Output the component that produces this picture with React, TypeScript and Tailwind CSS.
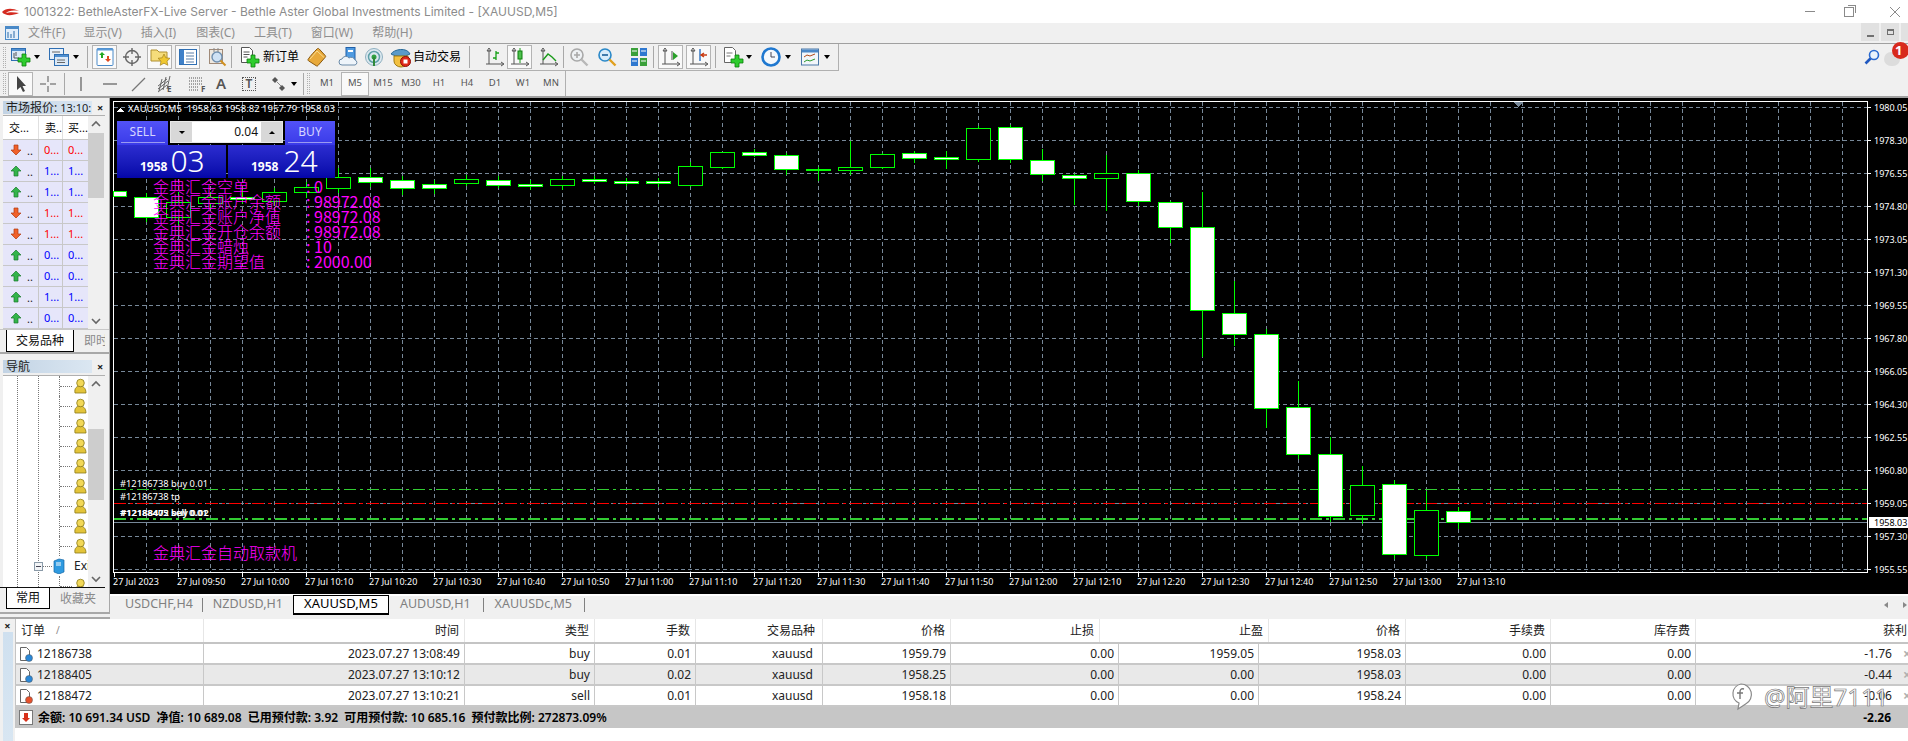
import React from "react";

const Plus = ({ x = 0, y = 0, s = 1 }: { x?: number; y?: number; s?: number }) => (
  <path transform={`translate(${x} ${y}) scale(${s})`} d="M4 0h4v4h4v4H8v4H4V8H0V4h4z" fill="#2ecc2e" stroke="#0b7d0b" strokeWidth="0.8" />
);
const Ic = ({ children, w = 22, h = 22 }: { children: React.ReactNode; w?: number; h?: number }) => (
  <svg width={w} height={h} viewBox="0 0 22 22" className="shrink-0">{children}</svg>
);

const IconNewChart = () => (
  <Ic><rect x="1.5" y="2.5" width="14" height="12" fill="#dbe9f7" stroke="#2f6fb3" /><rect x="2" y="3" width="13" height="2" fill="#4f8fd0" /><path d="M4 7v5h5M6 6v4" stroke="#555" fill="none" /><Plus x={8} y={8} /></Ic>
);
const IconProfiles = () => (
  <Ic><rect x="1.5" y="2.5" width="14" height="11" fill="#e7f0fa" stroke="#2f6fb3" /><rect x="6.5" y="8.5" width="14" height="11" fill="#dbe9f7" stroke="#2f6fb3" /><rect x="7" y="9" width="13" height="2" fill="#4f8fd0" /><path d="M4 6h8M9 14h8M9 16.5h8" stroke="#666" /></Ic>
);
const IconMW = () => (
  <Ic><rect x="3" y="2.5" width="16" height="17" rx="1" fill="#fff" stroke="#4a8ac8" /><rect x="3" y="2.5" width="16" height="2" fill="#5a9ad8" /><path d="M8 6l3 3H9v3H7V9H5z" fill="#24a824" /><path d="M14 16l-3-3h2v-3h2v3h2z" fill="#e04a20" /></Ic>
);
const IconCross = () => (
  <Ic><circle cx="11" cy="11" r="6.5" fill="none" stroke="#666" strokeWidth="1.4" /><path d="M11 2v6M11 14v6M2 11h6M14 11h6" stroke="#666" strokeWidth="1.4" /></Ic>
);
const IconFolder = () => (
  <Ic><path d="M2 4h6l2 2h8v9H2z" fill="#f5dc7a" stroke="#b09030" /><path d="M15 8l1.8 3.8 4.2.5-3 2.9.8 4.1-3.8-2.1-3.8 2.1.8-4.1-3-2.9 4.2-.5z" fill="#f0c830" stroke="#a08020" strokeWidth="0.7" /></Ic>
);
const IconTerm = () => (
  <Ic><rect x="2.5" y="3.5" width="17" height="15" fill="#fff" stroke="#2f6fb3" /><rect x="3" y="4" width="4" height="14" fill="#3f80c8" /><path d="M9 7h8M9 10h8M9 13h8M9 16h8" stroke="#5a7fa8" /></Ic>
);
const IconTester = () => (
  <Ic><rect x="3.5" y="3.5" width="13" height="14" fill="#eee8e0" stroke="#a08a78" /><circle cx="11" cy="11" r="5" fill="#cfe2f5" stroke="#7090b0" strokeWidth="1.4" /><path d="M14.5 14.5l5 5" stroke="#d09020" strokeWidth="2" /><path d="M8 2v4M12 2v4" stroke="#888" /></Ic>
);
const IconOrder = () => (
  <Ic><path d="M3.5 1.5h8l3 3v12h-11z" fill="#fff" stroke="#555" /><path d="M5.5 6h6M5.5 8.5h6M5.5 11h4" stroke="#555" /><Plus x={9} y={9} /></Ic>
);
const IconBook = () => (
  <Ic><path d="M2 13.500C5 9 8 6 11 3c.8-.8 1.500-.8 2.200 0l6 6.500c.6.700.6 1.200 0 1.800L12 19.500c-.6.700-1.200.7-1.800.2L2.500 14.800c-.5-.4-.7-.8-.5-1.300z" fill="#e8a93a" stroke="#8a5a10" /><path d="M4 13l7-8 7 6.500" fill="none" stroke="#f8dc90" /></Ic>
);
const IconCloud = () => (
  <Ic><rect x="8" y="1.5" width="9" height="12" fill="#4f9ae0" stroke="#1f5fa8" /><rect x="10" y="4" width="5" height="2" fill="#fff" /><path d="M4 19a3 3 0 0 1 0-6 4 4 0 0 1 7-1 4 4 0 0 1 6 2 2.6 2.6 0 0 1 0 5z" fill="#eef4fa" stroke="#6a8aa8" /></Ic>
);
const IconSignal = () => (
  <Ic><circle cx="11" cy="11" r="8.5" fill="#dce8f0" stroke="#8fb0c0" /><circle cx="11" cy="11" r="5.5" fill="none" stroke="#5fa0a8" strokeWidth="1.5" /><circle cx="11" cy="11" r="2.5" fill="#30a040" /><path d="M11 11v9" stroke="#308838" strokeWidth="2" /></Ic>
);
const IconAuto = () => (
  <Ic><path d="M1 8c3-5 16-7 19 0-5 3-14 3-19 0z" fill="#5a9ac8" stroke="#2a6a98" /><path d="M4 10h14v5a7 6 0 0 1-14 0z" fill="#f2c040" stroke="#a07a10" /><circle cx="15.5" cy="15.5" r="5" fill="#e02a1a" stroke="#901008" /><rect x="13.5" y="13.5" width="4" height="4" fill="#fff" /></Ic>
);
const Axes = ({ children }: { children?: React.ReactNode }) => (
  <Ic><path d="M5 2l-2 3h4zM5 4v14M2 18h17M17 16l3 2-3 2" fill="none" stroke="#555" />{children}</Ic>
);
const IconBars = () => <Axes><path d="M12 5v9M12 7h3M9 12h3" stroke="#16a016" strokeWidth="1.3" fill="none" /></Axes>;
const IconCandle = () => <Axes><path d="M11 2v15" stroke="#16a016" /><rect x="9" y="5" width="4" height="8" fill="#4fc04f" stroke="#0c800c" /></Axes>;
const IconLine = () => <Axes><path d="M5 14l5-6 4 3 4 4" fill="none" stroke="#189a18" strokeWidth="1.4" /></Axes>;
const IconZoomIn = () => (
  <Ic><circle cx="9" cy="9" r="6" fill="#eef1f4" stroke="#a8a8a8" strokeWidth="1.6" /><path d="M6 9h6M9 6v6" stroke="#a8a8a8" strokeWidth="1.6" /><path d="M13.5 13.5l6 6" stroke="#b8b8b8" strokeWidth="2.4" /></Ic>
);
const IconZoomOut = () => (
  <Ic><circle cx="9" cy="9" r="6" fill="#d8ecfa" stroke="#2a88c8" strokeWidth="1.6" /><path d="M6 9h6" stroke="#1a5f98" strokeWidth="1.6" /><path d="M13.5 13.5l6 6" stroke="#e0a020" strokeWidth="2.4" /></Ic>
);
const IconTile = () => (
  <Ic><rect x="3" y="2" width="7" height="8" fill="#3aa03a" /><rect x="12" y="2" width="7" height="8" fill="#2f78d0" /><rect x="3" y="12" width="7" height="8" fill="#2f78d0" /><rect x="12" y="12" width="7" height="8" fill="#3aa03a" /><path d="M4 5h5M13 5h5M4 15h5M13 15h5" stroke="#fff" /></Ic>
);
const IconShift = () => <Axes><path d="M12 5v9" stroke="#555" /><path d="M13 6l5 4-5 4z" fill="#2aa02a" /></Axes>;
const IconAutoscroll = () => <Axes><path d="M12 3v12" stroke="#2a70c0" strokeWidth="1.4" /><path d="M19 9l-5 0M16 7l-3 2 3 2" fill="none" stroke="#c83a10" strokeWidth="1.4" /></Axes>;
const IconNewDoc = () => (
  <Ic><path d="M2.5 1.5h8l3 3v12h-11z" fill="#fff" stroke="#666" /><path d="M4.5 7h6M4.5 10h4" stroke="#777" /><Plus x={9} y={9} /></Ic>
);
const IconClock = () => (
  <Ic><circle cx="11" cy="11" r="8.5" fill="#f4f8fc" stroke="#1f78d0" strokeWidth="2.6" /><path d="M11 6v5h4" fill="none" stroke="#445" /></Ic>
);
const IconTemplate = () => (
  <Ic><rect x="2.5" y="3" width="17" height="16" fill="#f2f6fa" stroke="#4a78a8" /><rect x="3" y="3.5" width="16" height="3" fill="#4a88c8" /><path d="M5 11l3-2 3 1 5-2" fill="none" stroke="#b04a1a" /><path d="M5 16l3-2 3 1 5-2" fill="none" stroke="#2a9a2a" /></Ic>
);

const Caret = ({ c = "" }: { c?: string }) => (
  <span className={`flex justify-center shrink-0 ${c}`}><span className="w-0 h-0 border-x-[3.5px] border-x-transparent border-t-[4px] border-t-black" /></span>
);
const Sep = ({ c = "" }: { c?: string }) => <span className={`w-[1px] h-[22px] bg-[#a8a8a8] shrink-0 ${c}`} />;
const Grip = ({ c = "" }: { c?: string }) => <span className={`w-[3px] h-[21px] shrink-0 border-x border-dotted border-[#b0b0b0] ${c}`} />;
const B = ({ c = "", active, children }: { c?: string; active?: boolean; children: React.ReactNode }) => (
  <span className={`h-[24px] flex items-center justify-center shrink-0 ${active ? "w-[25px] border border-[#b4b4b4] bg-[#f9f9f9]" : "w-[24px]"} ${c}`}>{children}</span>
);

const DrawIcon = ({ children }: { children: React.ReactNode }) => (
  <svg width="20" height="20" viewBox="0 0 20 20" fill="none" stroke="#555" className="shrink-0">{children}</svg>
);

function TitleBar() {
  return (
    <div className="h-[23px] bg-white flex items-center relative shrink-0">
      <svg width="18" height="8" viewBox="0 0 18 8" className="ml-[2px]"><path d="M0 4C4 0 10 0 17 3 10 2 6 3 4 5 7 4 12 4 17 5 10 8 3 8 0 4z" fill="#d42a20" /></svg>
      <span className="ml-[4px] text-[12px] [font-family:Inter,sans-serif] text-[#8c8c8c] whitespace-nowrap">1001322: BethleAsterFX-Live Server - Bethle Aster Global Investments Limited - [XAUUSD,M5]</span>
      <span className="ml-auto w-[10px] h-[1px] bg-[#8a8a8a] mr-[29px]" />
      <span className="w-[10px] h-[10px] border border-[#8a8a8a] mr-[36px] relative after:absolute after:content-[''] after:-top-[3px] after:-right-[3px] after:w-[8px] after:h-[8px] after:border-t after:border-r after:border-[#8a8a8a]" />
      <svg width="10" height="10" viewBox="0 0 10 10" className="mr-[8px]"><path d="M0 0l10 10M10 0L0 10" stroke="#8a8a8a" /></svg>
    </div>
  );
}

function MenuBar() {
  const items = [
    ["文件(F)", "ml-[9px]"],
    ["显示(V)", "ml-[18px]"],
    ["插入(I)", "ml-[19px]"],
    ["图表(C)", "ml-[20px]"],
    ["工具(T)", "ml-[19px]"],
    ["窗口(W)", "ml-[19px]"],
    ["帮助(H)", "ml-[19px]"],
  ];
  return (
    <div className="h-[21px] bg-[#f0f0f0] border-b border-[#a0a0a0] flex items-center shrink-0">
      <svg width="14" height="15" viewBox="0 0 14 15" className="ml-[5px]"><rect x="0.5" y="0.5" width="13" height="13" fill="#e2eefa" stroke="#4a8ac8" /><rect x="1" y="1" width="12" height="2" fill="#4a8ac8" /><path d="M3 6v6M6 8v4M9 5v7" stroke="#2a6aa8" /></svg>
      {items.map(([t, c]) => (
        <span key={t} className={`text-[12px] text-[#8f8f8f] whitespace-nowrap ${c}`}>{t}</span>
      ))}
      <span className="ml-auto flex self-start h-[19px] items-center gap-[2px] -mt-[1px]">
        <span className="w-[18px] h-[19px] bg-[#e1e1e1] flex items-end justify-center pb-[4px]"><span className="w-[7px] h-[2px] bg-[#707070]" /></span>
        <span className="w-[18px] h-[19px] bg-[#e1e1e1] flex items-center justify-center"><span className="w-[7px] h-[6px] border border-[#707070] border-t-2" /></span>
        <span className="w-[7px] h-[19px] bg-[#e1e1e1]" />
      </span>
    </div>
  );
}

function Toolbar1() {
  return (
    <div className="h-[27px] bg-[#f0f0f0] flex shrink-0">
      <div className="w-[839px] border-r border-b border-[#b0b0b0] flex items-center pl-[3px]">
        <Grip />
        <B c="ml-[2px] w-[26px]"><IconNewChart /></B>
        <Caret c="w-[8px] -ml-[1px]" />
        <B c="ml-[5px] w-[26px]"><IconProfiles /></B>
        <Caret c="w-[8px]" />
        <Sep c="ml-[7px]" />
        <B active c="ml-[4px]"><IconMW /></B>
        <B c="ml-[3px]"><IconCross /></B>
        <B active c="ml-[3px]"><IconFolder /></B>
        <B active c="ml-[3px]"><IconTerm /></B>
        <B c="ml-[5px]"><IconTester /></B>
        <Sep c="ml-[2px]" />
        <B c="ml-[5px]"><IconOrder /></B>
        <span className="text-[12px] text-black ml-[2px] w-[41px] whitespace-nowrap">新订单</span>
        <B c="ml-[1px]"><IconBook /></B>
        <B c="ml-[8px]"><IconCloud /></B>
        <B c="ml-[1px]"><IconSignal /></B>
        <B c="ml-[3px]"><IconAuto /></B>
        <span className="text-[12px] text-black w-[56px] whitespace-nowrap">自动交易</span>
        <Sep />
        <B c="ml-[13px]"><IconBars /></B>
        <B active><IconCandle /></B>
        <B c="ml-[5px]"><IconLine /></B>
        <Sep c="ml-[2px]" />
        <B c="ml-[3px]"><IconZoomIn /></B>
        <B c="ml-[4px]"><IconZoomOut /></B>
        <B c="ml-[8px]"><IconTile /></B>
        <Sep c="ml-[2px]" />
        <B active c="ml-[4px]"><IconShift /></B>
        <B active c="ml-[3px]"><IconAutoscroll /></B>
        <Sep c="ml-[4px]" />
        <B c="ml-[5px]"><IconNewDoc /></B>
        <Caret c="w-[8px]" />
        <B c="ml-[6px]"><IconClock /></B>
        <Caret c="w-[8px] ml-[1px]" />
        <B c="ml-[6px]"><IconTemplate /></B>
        <Caret c="w-[8px] ml-[1px]" />
      </div>
      <div className="flex-1 flex items-center border-b border-[#f0f0f0]">
        <svg width="16" height="16" viewBox="0 0 16 16" className="ml-[1025px]"><circle cx="10" cy="6" r="4.5" fill="#eaf3fc" stroke="#2a6ad0" strokeWidth="1.6" /><path d="M6.5 9.5L1.5 14.5" stroke="#1f58c0" strokeWidth="2.6" /></svg>
        <span className="relative ml-[4px] w-[16px] h-[14px] bg-[#dcdcdc] rounded-full mt-[4px]">
          <span className="absolute -top-[10px] left-[8px] w-[17px] h-[17px] rounded-full bg-[#d8291c] text-white text-[13px] leading-[17px] font-bold pl-[3px]">1</span>
        </span>
      </div>
    </div>
  );
}

const TF = ["M1", "M5", "M15", "M30", "H1", "H4", "D1", "W1", "MN"];

function Toolbar2() {
  return (
    <div className="h-[27px] bg-[#f0f0f0] border-b-2 border-[#a0a0a0] flex shrink-0">
      <div className="w-[566px] flex items-center pl-[3px] border-r border-[#b0b0b0]">
        <Grip />
        <B active c="ml-[2px]">
          <svg width="12" height="18" viewBox="0 0 12 18"><path d="M2 1v14l3.5-3 2.5 5 2-1-2.5-5H11z" fill="#444" /></svg>
        </B>
        <B c="ml-[3px]"><DrawIcon><path d="M10 2v6M10 12v6M2 10h6M12 10h6" /></DrawIcon></B>
        <Sep c="ml-[4px]" />
        <B c="ml-[4px]"><DrawIcon><path d="M10 3v14" stroke="#666" strokeWidth="1.3" /></DrawIcon></B>
        <B c="ml-[5px]"><DrawIcon><path d="M3 10h14" stroke="#666" strokeWidth="1.3" /></DrawIcon></B>
        <B c="ml-[4px]"><DrawIcon><path d="M4 17L17 4" stroke="#777" strokeWidth="1.3" /></DrawIcon></B>
        <B c="ml-[3px] relative">
          <DrawIcon><path d="M3 12l9-7M3 15l10-8M3 18l9-7M7 5l-3 12M11 3l-3 13M15 2l-3 13" stroke="#666" /></DrawIcon>
          <span className="absolute left-[14px] top-[13px] text-[8px] leading-[8px] font-bold text-[#555]">E</span>
        </B>
        <B c="ml-[7px] relative">
          <DrawIcon><path d="M3 4h14M3 7h14M3 10h14M3 13h10M3 16h10" strokeDasharray="1 1" /></DrawIcon>
          <span className="absolute left-[17px] top-[13px] text-[8px] leading-[8px] font-bold text-[#555]">F</span>
        </B>
        <span className="w-[24px] ml-[1px] text-center text-[15px] font-semibold text-[#555]">A</span>
        <B c="ml-[4px] relative">
          <span className="w-[14px] h-[14px] border border-dotted border-[#555] flex items-center justify-center text-[12px] leading-none font-semibold text-[#555]">T</span>
        </B>
        <B c="ml-[6px]">
          <svg width="16" height="16" viewBox="0 0 16 16"><path d="M4 1l3 3-3 3-3-3z" fill="#555" /><path d="M11 9l3 3-3 3-3-3z" fill="#555" /><path d="M6 6l4 4" stroke="#888" /></svg>
        </B>
        <Caret c="w-[8px] -ml-[1px]" />
        <Sep c="ml-[5px]" />
        <Grip c="ml-[3px]" />
        <div className="flex items-center ml-[3px]">
          {TF.map((t) =>
            <span key={t} className={`h-[24px] w-[28px] flex items-center justify-center text-[9.5px] text-[#555] ${t === "M5" ? "border border-[#b4b4b4] bg-[#f9f9f9]" : ""}`}>{t}</span>
          )}
        </div>
      </div>
    </div>
  );
}

function Arrow({ up }: { up: boolean }) {
  return (
    <svg width="12" height="12" viewBox="0 0 12 12" className="shrink-0">
      {up ? <path d="M6 1l5 5H8v5H4V6H1z" fill="#33b44a" stroke="#1a7a2c" strokeWidth="0.7" /> : <path d="M6 11L1 6h3V1h4v5h3z" fill="#f0602a" stroke="#b03a10" strokeWidth="0.7" />}
    </svg>
  );
}

const quotes: [boolean, string][] = [
  [false, "0..."], [true, "1..."], [true, "1..."], [false, "1..."], [false, "1..."],
  [true, "0..."], [true, "0..."], [true, "1..."], [true, "0..."],
];

function PanelHead({ title, extra }: { title: string; extra?: string }) {
  return (
    <div className="h-[15px] flex items-center pl-[3px] shrink-0">
      <div className="w-[89px] h-[13px] bg-gradient-to-r from-[#c2d3e4] to-[#dbe7f2] flex items-center pl-[3px] text-[12px] leading-[13px] text-[#222] whitespace-nowrap overflow-hidden">
        {title}{extra && <span className="ml-[3px] text-[11px]">{extra}</span>}
      </div>
      <span className="ml-[5px] text-[11px] leading-none font-bold text-[#222]">×</span>
    </div>
  );
}

function ScrollBar({ thumb, spacer }: { thumb: string; spacer: string }) {
  return (
    <div className="w-[16px] flex flex-col items-center bg-[#f0f0f0] shrink-0">
      <svg width="10" height="17" viewBox="0 0 10 17" className="shrink-0"><path d="M1 10l4-4 4 4" fill="none" stroke="#666" strokeWidth="1.6" /></svg>
      <div className={`w-full bg-[#cdcdcd] shrink-0 ${thumb}`} />
      <div className={spacer} />
      <svg width="10" height="17" viewBox="0 0 10 17" className="shrink-0 mt-auto"><path d="M1 7l4 4 4-4" fill="none" stroke="#666" strokeWidth="1.6" /></svg>
    </div>
  );
}

function MarketWatch() {
  return (
    <div className="h-[256px] flex flex-col border-b-2 border-[#a8a8a8] pt-[2px] shrink-0">
      <PanelHead title="市场报价:" extra="13:10:" />
      <div className="h-[214px] flex ml-[3px] mr-[4px] border-t border-[#b0b0b0]">
        <div className="w-[85px] shrink-0 flex flex-col">
          <div className="h-[24px] flex bg-white text-[11px] border-b border-[#c8c8c8] shrink-0">
            <span className="w-[36px] pl-[6px] leading-[23px] border-r border-[#e0e0e0] overflow-hidden whitespace-nowrap">交...</span>
            <span className="w-[24px] pl-[6px] leading-[23px] border-r border-[#e0e0e0] overflow-hidden whitespace-nowrap">卖...</span>
            <span className="w-[25px] pl-[5px] leading-[23px] overflow-hidden whitespace-nowrap">买...</span>
          </div>
          {quotes.map(([up, v], i) => (
            <div key={i} className="h-[21px] flex bg-[#e6e6fa] border-b border-[#c8c8c8] text-[11px] shrink-0">
              <span className="w-[36px] flex items-center pl-[7px] gap-[5px] border-r border-[#c8c8c8]"><Arrow up={up} /><span className="leading-none text-[#222]">..</span></span>
              <span className={`w-[24px] flex items-center pl-[5px] border-r border-[#c8c8c8] ${up ? "text-[#0000ff]" : "text-[#ff0000]"}`}>{v}</span>
              <span className={`w-[25px] flex items-center pl-[5px] ${up ? "text-[#0000ff]" : "text-[#ff0000]"}`}>{v}</span>
            </div>
          ))}
        </div>
        <ScrollBar thumb="h-[65px]" spacer="flex-1" />
      </div>
      <div className="h-[23px] flex pl-[6px] text-[12px] border-t border-[#c8c8c8]">
        <span className="w-[68px] h-[22px] bg-white border-r border-b border-black border-l flex items-center justify-center text-[#111]">交易品种</span>
        <span className="ml-[10px] w-[21px] overflow-hidden whitespace-nowrap text-[#8a8a8a] leading-[22px]">即时</span>
      </div>
    </div>
  );
}

function GoldRow() {
  return (
    <div className="h-[20px] flex items-center shrink-0 border-l border-dotted border-[#777]">
      <span className="w-[12px] border-t border-dotted border-[#777] shrink-0" />
      <svg width="13" height="16" viewBox="0 0 13 16" className="shrink-0 ml-[2px]"><path d="M1 15c-1-5 2-7 5-7s6 2 6 7z" fill="#e3c43a" stroke="#8a7a18" strokeWidth="0.8" /><circle cx="6.5" cy="5" r="3.8" fill="#f2d858" stroke="#8a7a18" strokeWidth="0.8" /></svg>
    </div>
  );
}

function Navigator() {
  const rows = [0, 1, 2, 3, 4, 5, 6, 7, 8];
  return (
    <div className="h-[260px] flex flex-col pt-[5px] border-b-2 border-[#a8a8a8] shrink-0">
      <PanelHead title="导航" />
      <div className="h-[212px] ml-[3px] mr-[4px] mt-[1px] flex border-t border-[#b0b0b0] shrink-0">
        <div className="w-[85px] bg-white relative overflow-hidden shrink-0 flex">
          <span className="ml-[14px] w-0 border-l border-dotted border-[#777]" />
          <span className="ml-[20px] w-0 border-l border-dotted border-[#777]" />
          <div className="flex-1 flex flex-col pl-[20px]">
            {rows.map((r) => <GoldRow key={r} />)}
            <div className="h-[20px] flex items-center -ml-[25px] relative shrink-0">
              <span className="w-[9px] h-[9px] border border-[#8a9aa8] bg-[#f2f4f6] flex items-center justify-center shrink-0"><span className="w-[5px] h-[1px] bg-[#445]" /></span>
              <span className="w-[9px] border-t border-dotted border-[#777] shrink-0" />
              <svg width="12" height="16" viewBox="0 0 12 16" className="shrink-0 ml-[1px]"><path d="M1 3l5-2 5 1v12l-5 2-5-2z" fill="#2f9ae0" stroke="#1568a8" strokeWidth="0.7" /><path d="M3 5h5M3 7h5" stroke="#fff" /></svg>
              <span className="ml-[9px] text-[12px] text-[#222] leading-none">Exi</span>
            </div>
            <GoldRow />
          </div>
        </div>
        <ScrollBar thumb="h-[71px] mt-[36px]" spacer="flex-1" />
      </div>
      <div className="h-[22px] flex pl-[6px] text-[12px] border-t border-[#111] mr-[4px] ml-[0px]">
        <span className="w-[44px] h-[21px] bg-white border-x border-b border-black flex items-center justify-center text-[#111]">常用</span>
        <span className="ml-[10px] text-[#8a8a8a] leading-[21px] whitespace-nowrap">收藏夹</span>
      </div>
    </div>
  );
}

type C = [number, number, number, number, number, boolean];
const candles: C[] = [
  [146, 197, 217, 193, 222, true],
  [178, 202, 217, 192, 235, false],
  [210, 197, 203, 192, 208, false],
  [242, 197, 199, 190, 204, true],
  [274, 192, 201, 188, 206, false],
  [306, 187, 192, 182, 198, false],
  [338, 177, 188, 168, 193, false],
  [370, 177, 182, 168, 187, true],
  [402, 180, 188, 176, 195, true],
  [434, 184, 188, 180, 194, true],
  [466, 179, 183, 175, 186, false],
  [498, 180, 185, 176, 188, true],
  [530, 184, 186, 180, 190, true],
  [562, 179, 185, 176, 190, false],
  [594, 179, 181, 176, 184, true],
  [626, 181, 183, 178, 186, true],
  [658, 181, 183, 178, 187, true],
  [690, 166, 185, 162, 187, false],
  [722, 152, 167, 152, 169, false],
  [754, 152, 155, 149, 157, true],
  [786, 155, 169, 153, 175, true],
  [818, 169, 170, 167, 181, true],
  [850, 167, 170, 141, 175, false],
  [882, 154, 167, 153, 169, false],
  [914, 153, 158, 151, 163, true],
  [946, 157, 159, 151, 169, true],
  [978, 128, 159, 126, 162, false],
  [1010, 127, 159, 125, 163, true],
  [1042, 160, 174, 149, 181, true],
  [1074, 175, 178, 174, 205, true],
  [1106, 173, 178, 155, 211, false],
  [1138, 173, 201, 170, 206, true],
  [1170, 202, 227, 201, 243, true],
  [1202, 227, 310, 192, 357, true],
  [1234, 313, 334, 281, 346, true],
  [1266, 334, 408, 329, 428, true],
  [1298, 407, 454, 381, 459, true],
  [1330, 454, 516, 437, 522, true],
  [1362, 485, 515, 466, 524, false],
  [1394, 484, 554, 480, 559, true],
  [1426, 510, 555, 491, 559, false],
  [1458, 511, 522, 507, 529, true],
];

const prices = ["1980.05", "1978.30", "1976.55", "1974.80", "1973.05", "1971.30", "1969.55", "1967.80", "1966.05", "1964.30", "1962.55", "1960.80", "1959.05", "1957.30", "1955.55"];
const vx = Array.from({ length: 54 }, (_, i) => 146 + 32 * i);
const times = ["27 Jul 2023", "27 Jul 09:50", "27 Jul 10:00", "27 Jul 10:10", "27 Jul 10:20", "27 Jul 10:30", "27 Jul 10:40", "27 Jul 10:50", "27 Jul 11:00", "27 Jul 11:10", "27 Jul 11:20", "27 Jul 11:30", "27 Jul 11:40", "27 Jul 11:50", "27 Jul 12:00", "27 Jul 12:10", "27 Jul 12:20", "27 Jul 12:30", "27 Jul 12:40", "27 Jul 12:50", "27 Jul 13:00", "27 Jul 13:10"];

function ChartSvg() {
  return (
    <svg width="1798" height="496" viewBox="110 98 1798 496" className="absolute left-0 top-0" shapeRendering="crispEdges">
      <g stroke="#778899" strokeDasharray="4 3">
        {prices.map((_, i) => <line key={i} x1="114" x2="1867" y1={107.5 + 33 * i} y2={107.5 + 33 * i} />)}
        {vx.map((x) => <line key={x} x1={x + 0.5} x2={x + 0.5} y1="102" y2="572" />)}
      </g>
      <path d="M1514 102h9l-4.500 5z" fill="#778899" />
      <line x1="114" x2="1867" y1="489.5" y2="489.5" stroke="#32cd32" strokeDasharray="12 4 3 4" />
      <line x1="114" x2="1867" y1="503.500" y2="503.500" stroke="#ff0000" strokeDasharray="12 4 3 4" />
      <line x1="114" x2="1867" y1="519" y2="519" stroke="#32cd32" strokeWidth="2" strokeDasharray="12 4 3 4" />
      <line x1="114" x2="1867" y1="522.500" y2="522.500" stroke="#778899" />
      <path d="M113.500 101.500H1867.500V572.500H113.500z" fill="none" stroke="#fff" />
      {prices.map((_, i) => <line key={i} x1="1868" x2="1871" y1={107.5 + 33 * i} y2={107.5 + 33 * i} stroke="#fff" />)}
      {times.map((_, i) => <line key={i} x1={114.5 + 64 * i} x2={114.5 + 64 * i} y1="573" y2="577" stroke="#fff" />)}
      <rect x="113.500" y="191.500" width="13" height="5" fill="#fff" stroke="#00ff00" />
      {candles.map(([x, t, b, wt, wb, w]) => (
        <g key={x}>
          <line x1={x + 0.5} x2={x + 0.5} y1={wt} y2={wb} stroke="#00ff00" />
          <rect x={x - 11.5} y={t + 0.5} width="24" height={Math.max(b - t, 1)} fill={w ? "#ffffff" : "#000000"} stroke="#00ff00" />
        </g>
      ))}
      <rect x="1869" y="517" width="39" height="11" fill="#fff" />
      <g fill="#fff" fontSize="9" shapeRendering="auto">
        {prices.map((p, i) => <text key={p} x="1874" y={111 + 33 * i}>{p}</text>)}
        <text x="1874" y="526" fill="#000">1958.03</text>
        {times.map((t, i) => <text key={t} x={i === 0 ? 113 : 114 + 64 * i - 1} y="585">{t}</text>)}
        <text x="120" y="486.500" fontSize="9.300">#12186738 buy 0.01</text>
        <text x="120" y="500" fontSize="9.300">#12186738 tp</text>
        <text x="120" y="516" fontSize="9.300" fontWeight="600">#12188405 buy 0.02</text>
        <text x="120.400" y="516" fontSize="9.300" fontWeight="600">#12188472 sell 0.01</text>
        <text x="128" y="112" fontSize="9.500" style={{ whiteSpace: "pre" }}>XAUUSD,M5  1958.63 1958.82 1957.79 1958.03</text>
      </g>
      <path d="M117 112l3.500-4 3.500 4z" fill="#fff" />
    </svg>
  );
}

function TradePanel() {
  return (
    <div className="absolute left-[7px] top-[23px] w-[218px] flex flex-col">
      <div className="flex h-[24px]">
        <div className="w-[51px] bg-gradient-to-b from-[#5252f7] to-[#3a3ae8] flex flex-col items-center text-[12px] text-[#d6d6ff]">
          <span className="leading-[21px]">SELL</span>
          <span className="w-[44px] h-[1px] bg-[#9a9af0]" />
        </div>
        <div className="ml-[2px] w-[113px] h-[22px] bg-[#d8d8d8] border border-[#e8e8e8] flex items-center">
          <span className="w-[21px] h-full flex items-center justify-center"><span className="w-0 h-0 border-x-[3px] border-x-transparent border-t-[3px] border-t-black" /></span>
          <span className="flex-1 h-full bg-white text-right pr-[3px] text-[12px] leading-[20px] text-[#111]">0.04</span>
          <span className="w-[21px] h-full flex items-center justify-center"><span className="w-0 h-0 border-x-[3px] border-x-transparent border-b-[3px] border-b-black" /></span>
        </div>
        <div className="ml-[2px] w-[50px] bg-gradient-to-b from-[#5252f7] to-[#3a3ae8] flex flex-col items-center text-[12px] text-[#d6d6ff]">
          <span className="leading-[21px]">BUY</span>
          <span className="w-[44px] h-[1px] bg-[#9a9af0]" />
        </div>
      </div>
      <div className="flex h-[33px] gap-[2px] text-white">
        <div className="w-[109px] bg-gradient-to-b from-[#2c2cd0] to-[#0505a8] flex items-end pl-[23px]">
          <span className="text-[12px] font-bold leading-[20px] mb-[1px]">1958</span>
          <span className="ml-[3px] text-[30px] font-light leading-[34px]">03</span>
        </div>
        <div className="w-[107px] bg-gradient-to-b from-[#2c2cd0] to-[#0505a8] flex items-end pl-[23px]">
          <span className="text-[12px] font-bold leading-[20px] mb-[1px]">1958</span>
          <span className="ml-[5px] text-[30px] font-light leading-[34px]">24</span>
        </div>
      </div>
    </div>
  );
}

const stats: [string, string][] = [
  ["金典汇金空单", "0"],
  ["金典汇金账户余额", "98972.08"],
  ["金典汇金账户净值", "98972.08"],
  ["金典汇金开仓余额", "98972.08"],
  ["金典汇金蜡烛", "10"],
  ["金典汇金期望值", "2000.00"],
];

function Stats() {
  return (
    <div className="absolute left-[43px] top-[81px] flex flex-col text-[#ff00ff] text-[16px] leading-[15px] font-light [font-family:'Noto_Sans_CJK_SC','Noto_Sans',sans-serif]">
      {stats.map(([a, b]) => (
        <div key={a} className="h-[15px] flex whitespace-nowrap">
          <span className="w-[153px]">{a}</span>
          <span className="w-[8px] font-normal">:</span>
          <span className="font-normal">{b}</span>
        </div>
      ))}
    </div>
  );
}

function ChartTabs() {
  const T = ({ t, c = "" }: { t: string; c?: string }) => <span className={`text-[12.5px] text-[#808080] whitespace-nowrap ${c}`}>{t}</span>;
  const S = ({ c = "" }: { c?: string }) => <span className={`w-[1px] h-[14px] bg-[#808080] ${c}`} />;
  return (
    <div className="h-[25px] bg-[#f0f0f0] border-t-2 border-white flex shrink-0 relative">
      <div className="flex items-center h-[19px] -mt-[1px] w-full">
        <T t="USDCHF,H4" c="ml-[15px]" />
        <S c="ml-[9px]" />
        <T t="NZDUSD,H1" c="ml-[10px]" />
        <span className="ml-[10px] h-[20px] w-[96px] bg-white border-t border-r border-l border-b-2 border-black text-[13px] text-black flex items-center justify-center whitespace-nowrap">XAUUSD,M5</span>
        <T t="AUDUSD,H1" c="ml-[11px]" />
        <S c="ml-[12px]" />
        <T t="XAUUSDc,M5" c="ml-[11px]" />
        <S c="ml-[12px]" />
        <span className="ml-auto mr-[15px] w-0 h-0 border-y-[3.500px] border-y-transparent border-r-[4px] border-r-[#888]" />
        <span className="mr-[1px] w-0 h-0 border-y-[3.500px] border-y-transparent border-l-[4px] border-l-[#888]" />
      </div>
    </div>
  );
}

const head = ["订单", "时间", "类型", "手数", "交易品种", "价格", "止损", "止盈", "价格", "手续费", "库存费", "获利"];
const orders: string[][] = [
  ["12186738", "2023.07.27 13:08:49", "buy", "0.01", "xauusd", "1959.79", "0.00", "1959.05", "1958.03", "0.00", "0.00", "-1.76"],
  ["12188405", "2023.07.27 13:10:12", "buy", "0.02", "xauusd", "1958.25", "0.00", "0.00", "1958.03", "0.00", "0.00", "-0.44"],
  ["12188472", "2023.07.27 13:10:21", "sell", "0.01", "xauusd", "1958.18", "0.00", "0.00", "1958.24", "0.00", "0.00", "-0.06"],
];
const gridCols = "grid grid-cols-[188px_261px_130px_101px_127px_128px_168px_140px_147px_145px_145px_213px]";
const headCols = "grid grid-cols-[188px_261px_130px_101px_127px_128px_149px_169px_137px_145px_145px_213px]";

function DocIcon({ color }: { color: string }) {
  return (
    <svg width="14" height="16" viewBox="0 0 14 16" className="shrink-0"><path d="M1.500 1.500h6l3 3v10h-9z" fill="#fff" stroke="#666" /><circle cx="10" cy="12" r="3.500" fill={color} stroke="#555" strokeWidth="0.5" /></svg>
  );
}

function Terminal() {
  return (
    <div className="flex-1 flex bg-white relative min-h-0">
      <div className="w-[15px] bg-[#f0f0f0] flex flex-col items-center shrink-0">
        <span className="text-[11px] font-bold leading-[11px] mt-[1px] text-[#222]">×</span>
        <span className="w-[10px] flex-1 mt-[1px] bg-gradient-to-b from-[#cfe0ef] to-[#d8e6f2]" />
      </div>
      <div className="flex-1 flex flex-col text-[12px] text-[#222] min-w-0">
        <div className={`${headCols} h-[25px] border-b-2 border-[#c4c4c4] border-l border-l-[#c4c4c4]`}>
          {head.map((h, i) => (
            <div key={i} className={`flex items-center border-r border-[#e6e6e6] ${i === 0 ? "justify-start pl-[5px]" : i === 11 ? "justify-end pr-[1px]" : i === 4 ? "justify-end pr-[7px]" : "justify-end pr-[5px]"}`}>
              {h}{i === 0 && <span className="ml-[11px] text-[10px] text-[#888]">/</span>}
            </div>
          ))}
        </div>
        {orders.map((r, i) => (
          <div key={r[0]} className={`${gridCols} h-[21px] border-b-2 border-[#c8c8c8] border-l border-l-[#c4c4c4] ${i === 1 ? "bg-[#e9e9e9]" : ""}`}>
            {r.map((v, j) => (
              <div key={j} className={`flex items-center border-r border-[#c8c8c8] ${j === 0 ? "pl-[3px] gap-[4px]" : j === 11 ? "justify-end pr-[17px] border-r-0 relative" : j === 4 ? "justify-end pr-[9px]" : "justify-end pr-[4px]"}`}>
                {j === 0 && <DocIcon color={i === 2 ? "#e8502a" : "#2a88d8"} />}
                {v}
                {j === 11 && <span className="absolute right-[-2px] top-[2px] text-[14px] leading-[16px] font-bold text-[#b0b0b0]">×</span>}
              </div>
            ))}
          </div>
        ))}
        <div className="h-[21px] bg-[#c6c6c6] flex items-center font-semibold text-black border-l border-l-[#c4c4c4]">
          <span className="w-[14px] h-[15px] ml-[3px] bg-white border border-[#777] flex items-center justify-center shrink-0">
            <svg width="8" height="9" viewBox="0 0 8 9"><path d="M4 9L0 5h2V0h4v5h2z" fill="#d8301a" /></svg>
          </span>
          <span className="ml-[5px] whitespace-pre">余额: 10 691.34 USD  净值: 10 689.08  已用预付款: 3.92  可用预付款: 10 685.16  预付款比例: 272873.09%</span>
          <span className="ml-auto mr-[17px] font-bold">-2.26</span>
        </div>
      </div>
      <div className="absolute left-[1729px] top-[63px] flex items-center pointer-events-none">
        <svg width="24" height="30" viewBox="0 0 24 30"><path d="M12 2a10.500 10.500 0 0 1 5 19.700L9 27l1-6A10 10 0 0 1 12 2z" fill="#fff" stroke="#888" strokeWidth="1.200" /><path d="M15 7c-3-1-4 1-4 3v7M8 11h6" fill="none" stroke="#777" strokeWidth="1.400" /></svg>
        <span className="ml-[11px] text-[24px] leading-none text-white [-webkit-text-stroke:0.7px_#777] whitespace-nowrap">@阿里7111</span>
      </div>
    </div>
  );
}

export default function App() {
  return (
    <div className="w-[1908px] h-[741px] flex flex-col overflow-hidden bg-white [font-family:'Noto_Sans','Noto_Sans_CJK_SC',sans-serif]">
      <TitleBar />
      <MenuBar />
      <Toolbar1 />
      <Toolbar2 />
      <div className="h-[521px] flex shrink-0 border-b-2 border-[#a8a8a8] bg-[#f0f0f0]">
        <div className="w-[110px] h-[516px] flex flex-col border-r border-[#a8a8a8] shrink-0">
          <MarketWatch />
          <Navigator />
        </div>
        <div className="flex-1 flex flex-col min-w-0">
          <div className="h-[496px] bg-black relative shrink-0 overflow-hidden">
            <ChartSvg />
            <TradePanel />
            <Stats />
            <div className="absolute left-[43px] top-[447px] text-[#ff00ff] text-[16px] leading-[15px] font-light whitespace-nowrap [font-family:'Noto_Sans_CJK_SC',sans-serif]">金典汇金自动取款机</div>
          </div>
          <ChartTabs />
        </div>
      </div>
      <Terminal />
    </div>
  );
}
